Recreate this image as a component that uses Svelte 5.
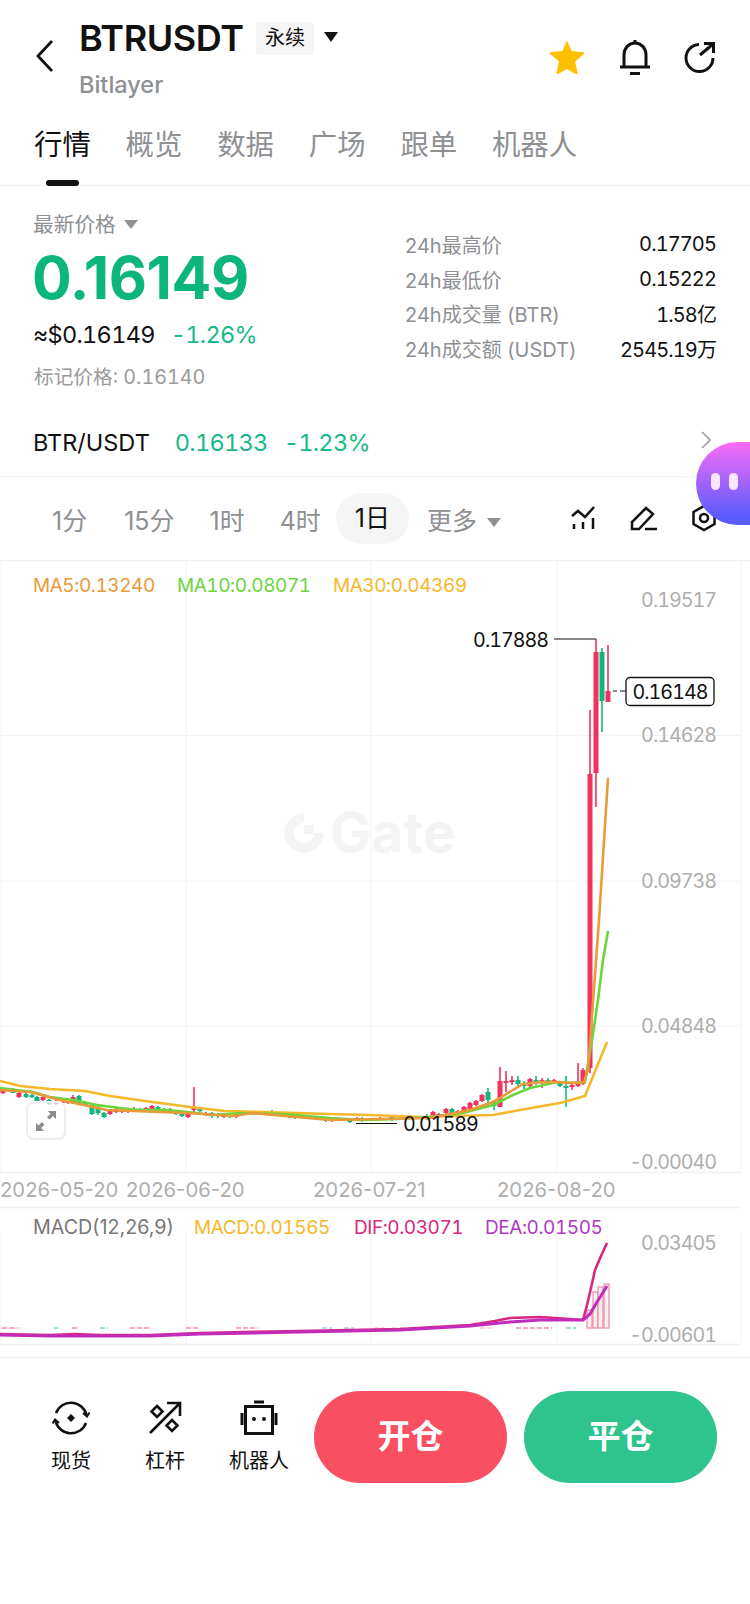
<script>
  const tabs = ['行情', '概览', '数据', '广场', '跟单', '机器人'];
  const stats = [
    ['24h最高价', '0.17705'],
    ['24h最低价', '0.15222'],
    ['24h成交量 (BTR)', '1.58亿'],
    ['24h成交额 (USDT)', '2545.19万']
  ];
  const frames = ['1分', '15分', '1时', '4时', '1日'];
  const R = '#f0325e', G = '#12b67a';
  // x, wick top, wick bottom, body top, body bottom, colour
  const candles = [
    [3,1088,1094,1090,1093,R],[13,1088,1093,1090,1093,G],[19,1092,1098,1093,1097,R],[26,1092,1098,1094,1097,G],[32,1094,1098,1095,1097,G],[37,1096,1102,1097,1101,G],[43,1095,1101,1097,1100,R],[49,1099,1105,1100,1104,G],[56,1100,1105,1101,1104,R],[62,1101,1104,1102,1103,R],[68,1101,1104,1102,1103,R],[73,1095,1104,1097,1103,R],[79,1095,1105,1096,1104,G],[85,1101,1106,1102,1105,G],[92,1104,1115,1105,1114,G],[98,1106,1115,1107,1113,G],[104,1112,1118,1113,1117,G],[110,1111,1115,1111,1114,R],[116,1108,1113,1109,1112,R],[122,1109,1113,1110,1112,R],[128,1109,1113,1110,1112,R],[134,1107,1112,1109,1111,R],[140,1108,1112,1109,1111,G],[146,1107,1111,1108,1110,R],[152,1105,1111,1106,1110,R],[158,1106,1110,1107,1109,G],[164,1108,1111,1109,1110,G],[170,1108,1112,1109,1111,G],[176,1111,1115,1112,1114,G],[182,1113,1117,1114,1116,G],[188,1113,1118,1114,1117,R],[194,1087,1112,1107,1110,R],[200,1107,1112,1108,1111,G],[206,1112,1116,1113,1115,R],[212,1112,1118,1113,1116,G],[218,1113,1118,1114,1116,G],[224,1113,1118,1114,1117,R],[230,1114,1118,1115,1117,G],[236,1110,1118,1114,1117,R],[242,1111,1116,1112,1115,G],[253,1111,1115,1112,1114,G],[272,1110,1115,1112,1114,G],[283,1112,1116,1113,1115,G],[289,1113,1118,1114,1117,G],[295,1115,1119,1116,1118,G],[302,1115,1118,1116,1117,R],[320,1116,1120,1117,1119,G],[326,1118,1122,1119,1121,G],[332,1117,1122,1118,1121,R],[350,1119,1123,1120,1122,G],[357,1117,1121,1118,1120,R],[362,1117,1122,1118,1121,G],[380,1117,1120,1118,1119,R],[392,1116,1121,1117,1120,G],[427,1114,1120,1116,1119,G],[433,1111,1119,1112,1118,R],[439,1113,1118,1114,1117,R],[446,1108,1114,1109,1113,R],[452,1108,1114,1109,1113,G],[458,1110,1114,1111,1113,R],[464,1106,1113,1107,1112,R],[470,1102,1110,1103,1109,R],[476,1100,1106,1101,1105,R],[482,1094,1102,1095,1101,R],[488,1088,1105,1092,1100,G],[494,1100,1110,1102,1106,G],[500,1067,1107,1081,1107,R],[506,1071,1092,1081,1083,R],[512,1076,1085,1080,1082,R],[518,1076,1086,1080,1084,G],[524,1081,1089,1083,1086,G],[530,1078,1087,1079,1086,R],[536,1076,1085,1080,1082,G],[542,1078,1088,1080,1083,R],[548,1078,1085,1080,1082,G],[554,1079,1083,1080,1082,R],[560,1082,1087,1083,1086,G],[566,1076,1107,1086,1088,G],[572,1084,1090,1085,1087,R],[578,1063,1087,1084,1086,R],[583,1068,1085,1070,1084,R],[590,710,1073,774,1068,R],[596,639,807,652,773,R],[602,648,732,652,701,G],[608,645,700,691,702,R]
  ];
  const pts = (a) => a.map((p) => p.join(',')).join(' ');
  const ma30 = pts([[0,1081],[20,1086],[50,1089],[85,1091],[110,1096],[145,1101],[190,1107],[225,1111],[265,1112],[330,1114],[370,1115],[420,1117],[493,1115],[520,1110],[560,1103],[585,1096],[607,1042]]);
  const ma10 = pts([[0,1088],[33,1092],[50,1097],[73,1100],[97,1105],[120,1108],[140,1110],[167,1110],[187,1112],[213,1115],[240,1113],[283,1114],[330,1118],[363,1120],[397,1119],[430,1117],[463,1113],[493,1105],[513,1095],[530,1088],[557,1082],[577,1083],[585,1082],[592,1040],[598,1000],[603,960],[608,931]]);
  const ma5 = pts([[0,1090],[30,1092],[60,1100],[107,1110],[133,1111],[187,1113],[233,1116],[253,1113],[330,1120],[430,1118],[470,1110],[493,1102],[500,1098],[513,1090],[523,1084],[543,1082],[557,1082],[570,1083],[584,1082],[588,1070],[599,920],[608,778]]);
  const dif = pts([[0,1334],[50,1335],[75,1334],[100,1335],[150,1335],[200,1333],[300,1331],[400,1329],[470,1325],[495,1321],[510,1318],[540,1317],[570,1319],[583,1320],[587,1305],[591,1288],[595,1270],[601,1256],[607,1243]]);
  const dea = pts([[0,1335],[50,1336],[100,1336],[150,1336],[200,1334],[300,1332],[400,1330],[470,1326],[510,1322],[540,1320],[570,1320],[583,1320],[590,1314],[597,1302],[607,1286]]);
  const hist = [[587,1310],[593,1292],[598,1287],[604,1284]];
  const dashes = [[2,12,R],[14,8,'#f4a0b0'],[54,4,G],[72,6,R],[100,8,G],[130,20,R],[186,12,R],[236,22,R],[322,10,'#6aa5d8'],[344,10,'#6aa5d8'],[374,10,'#f4a0b0'],[392,14,'#f4a0b0'],[414,30,R],[480,12,'#f4a0b0'],[516,36,R],[566,10,G]];
  const vx = [1, 186, 371, 557, 741];
  const hy = [735.5, 881, 1026];
  const axis = [['0.19517',600],['0.14628',735],['0.09738',881],['0.04848',1026],['-0.00040',1162],['0.03405',1243],['-0.00601',1335]];
  const dates = [['2026-05-20',0],['2026-06-20',126],['2026-07-21',313],['2026-08-20',497]];
</script>

<div class="page">
  <header class="head">
    <svg class="back" width="20" height="32" viewBox="0 0 20 32"><path d="M17 1 3 16l14 15" fill="none" stroke="#111" stroke-width="2.800"/></svg>
    <div class="names">
      <div class="title-row">
        <span class="title">BTRUSDT</span>
        <span class="badge">永续</span>
        <span class="caret dark"></span>
      </div>
      <div class="sub">Bitlayer</div>
    </div>
    <div class="head-icons">
      <svg width="38" height="36" viewBox="0 0 38 36"><path d="M19 2.500l4.600 10.600 11.500 1.100c1 .1 1.400 1.300.6 2l-8.700 7.500 2.600 11c.2 1-.9 1.800-1.800 1.300L19 31l-8.800 4.900c-.9.500-2-.3-1.800-1.300l2.600-11-8.700-7.500c-.8-.7-.4-1.900.6-2l11.500-1.100z" fill="#ffc000" transform="translate(0 -1)"/></svg>
      <svg width="32" height="36" viewBox="0 0 32 36"><path d="M5 27V16C5 9 10 4 16 4s11 5 11 12v11M1 28h30M16 1v3" fill="none" stroke="#111" stroke-width="3"/><path d="M11 33h10v3H11z" fill="#111"/></svg>
      <svg width="32" height="32" viewBox="0 0 32 32"><path d="M15 3.500A13.500 13.500 0 1 0 29 17" fill="none" stroke="#111" stroke-width="3"/><path d="M16 14 29 3M20 2.500h9.500V12" fill="none" stroke="#111" stroke-width="3"/></svg>
    </div>
  </header>

  <nav class="tabs">
    {#each tabs as t, i}
      <span class="tab" class:active={i === 0}>{t}</span>
    {/each}
  </nav>

  <section class="quote">
    <div class="left">
      <div class="muted latest">最新价格<span class="caret grey"></span></div>
      <div class="price">0.16149</div>
      <div class="conv"><span>≈$0.16149</span><span class="up">-1.26%</span></div>
      <div class="mark">标记价格: 0.16140</div>
    </div>
    <dl class="stats">
      {#each stats as s}
        <div class="stat"><dt>{s[0]}</dt><dd>{s[1]}</dd></div>
      {/each}
    </dl>
  </section>

  <div class="spot">
    <span class="pair">BTR/USDT</span>
    <span class="up">0.16133</span>
    <span class="up">-1.23%</span>
    <svg class="chev" width="12" height="18" viewBox="0 0 12 18"><path d="M2 1l8 8-8 8" fill="none" stroke="#999" stroke-width="1.600"/></svg>
  </div>

  <div class="frames">
    {#each frames as f, i}
      <span class="frame" class:on={i === 4}>{f}</span>
    {/each}
    <span class="frame more">更多 <span class="caret grey"></span></span>
    <div class="tools">
      <svg width="26" height="26" viewBox="0 0 26 26" fill="none" stroke="#111" stroke-width="2.500"><path d="M1 11l6-5 7 6 9-10"/><path d="M3 19v5M12 17v7M22 13v11"/></svg>
      <svg width="28" height="26" viewBox="0 0 28 26" fill="none" stroke="#111" stroke-width="2.500"><path d="M2 24v-7L16 3l7 6L9 24zM15 24h12"/></svg>
      <svg width="26" height="28" viewBox="0 0 26 28" fill="none" stroke="#111" stroke-width="2.500"><path d="M13 2l10.500 6v12L13 26 2.500 20V8z"/><circle cx="13" cy="14" r="4"/></svg>
    </div>
  </div>

  <div class="chart">
    <svg class="plot" width="750" height="798" viewBox="0 560 750 798">
      <path d="M0 560.500H750M0 1172.500H741M0 1207.500H741M0 1344.500H741M0 1357.500H750" stroke="#f0f0f0" stroke-width="1.500" fill="none"/>
      {#each vx as x}
        <path d="M{x} 560V1172M{x} 1232V1344" stroke="#f3f3f3" fill="none"/>
      {/each}
      {#each hy as y}
        <path d="M0 {y}H741" stroke="#f3f3f3" fill="none"/>
      {/each}

      <g class="wm">
        <path d="M305 818a15 15 0 1 0 15 15" fill="none" stroke="#f3f4f4" stroke-width="9.500" transform="translate(-1 0)"/>
        <rect x="304" y="825" width="10" height="9" fill="#f3f4f4"/>
        <text x="330" y="852" class="wmt">Gate</text>
      </g>

      <text x="33" y="592" class="t lab o">MA5:0.13240</text>
      <text x="177" y="592" class="t lab l">MA10:0.08071</text>
      <text x="333" y="592" class="t lab y">MA30:0.04369</text>

      {#each axis as a}
        <text x="716" y={a[1] + 7} text-anchor="end" class="t ax">{a[0]}</text>
      {/each}
      {#each dates as d}
        <text x={d[1]} y="1197" class="date">{d[0]}</text>
      {/each}

      {#each candles as c}
        <path d="M{c[0]} {c[1]}V{c[2]}" stroke={c[5]} stroke-width="1.600" fill="none"/>
        <rect x={c[0] - 2.500} y={c[3]} width="5" height={c[4] - c[3]} fill={c[5]}/>
      {/each}

      <polyline points={ma30} class="ln" stroke="#f5b82b"/>
      <polyline points={ma10} class="ln" stroke="#6bd63b"/>
      <polyline points={ma5} class="ln" stroke="#ea9a38"/>

      <path d="M554 639H596M356 1123.500H397" stroke="#111" stroke-width="1.200" fill="none"/>
      <path d="M613 691h4M620 691h6" stroke="#111" stroke-width="1.200" fill="none"/>
      <text x="548" y="647" text-anchor="end" class="t k">0.17888</text>
      <text x="403" y="1131" class="t k">0.01589</text>
      <rect x="626" y="677.500" width="88" height="28" rx="4" fill="#fff" stroke="#111" stroke-width="1.300"/>
      <text x="670" y="699" text-anchor="middle" class="t k">0.16148</text>

      <text x="33" y="1234" class="macd mc">MACD(12,26,9)</text>
      <text x="194" y="1234" class="t lab y">MACD:0.01565</text>
      <text x="354" y="1234" class="t lab dif">DIF:0.03071</text>
      <text x="485" y="1234" class="t lab dea">DEA:0.01505</text>

      {#each dashes as d}
        <path d="M{d[0]} 1328H{d[0] + d[1]}" stroke={d[2]} stroke-width="1.600" stroke-dasharray="5 2" fill="none" opacity=".55"/>
      {/each}
      {#each hist as h}
        <rect x={h[0]} y={h[1]} width="5" height={1328 - h[1]} fill="#fdeef1" stroke="#e98ba2" stroke-width="1.200"/>
      {/each}
      <polyline points={dif} class="ln" stroke="#d6287e"/>
      <polyline points={dea} class="ln thick" stroke="#c22cbc"/>
    </svg>
    <div class="expand">
      <svg width="22" height="22" viewBox="0 0 22 22" fill="#8b8b8b"><path d="M13 1h8v8l-3-3-3.500 3.500-2.500-2.500L15.500 4zM1 13v8h8l-3-3 3.500-3.500L7 12l-3.500 3.500z"/></svg>
    </div>
  </div>

  <footer class="actions">
    <div class="act">
      <svg width="38" height="38" viewBox="0 0 38 38" fill="none" stroke="#111" stroke-width="2.600"><path d="M4 14A16 16 0 0 1 34.500 16M34 24A16 16 0 0 1 3.500 22"/><path d="M31 14l4 3.500 2.500-4M7 24l-4-3.500-2.500 4" stroke-width="2"/><path d="M19 15l4 4-4 4-4-4z" fill="#111" stroke="none"/></svg>
      <span>现货</span>
    </div>
    <div class="act">
      <svg width="36" height="36" viewBox="0 0 36 36" fill="none" stroke="#111" stroke-width="2.600"><path d="M3 33 32 4M20 3h13v13M10 6l5.500 5.500L10 17l-5.500-5.500zM25 20l5.500 5.500L25 31l-5.500-5.500z"/></svg>
      <span>杠杆</span>
    </div>
    <div class="act">
      <svg width="38" height="36" viewBox="0 0 38 36" fill="none" stroke="#111" stroke-width="3"><rect x="5.500" y="6.500" width="27" height="27"/><path d="M14 2h10M2 13v12M36 13v12"/><circle cx="14" cy="19" r="2" fill="#111" stroke="none"/><circle cx="24" cy="19" r="2" fill="#111" stroke="none"/></svg>
      <span>机器人</span>
    </div>
    <button class="btn open">开仓</button>
    <button class="btn close">平仓</button>
  </footer>

  <div class="pet"><i></i><i></i></div>
</div>

<style>
  :global(body) { margin: 0; background: #fff; }
  .page {
    position: relative; width: 750px; height: 1604px; overflow: hidden; background: #fff;
    font-family: Inter, "Noto Sans CJK SC", sans-serif; color: #111;
  }
  .head { display: flex; height: 106px; padding-left: 35px; box-sizing: border-box; position: relative; }
  .back { margin-top: 40px; flex: none; }
  .names { margin-left: 24px; padding-top: 19px; }
  .title-row { display: flex; align-items: center; height: 38px; }
  .title { font-size: 36px; font-weight: 600; letter-spacing: -0.4px; width: 177px; }
  .badge { background: #f5f5f5; border-radius: 4px; width: 58px; height: 33px; font-size: 20px; line-height: 33px; text-align: center; }
  .caret { display: inline-block; width: 0; height: 0; border-left: 7px solid transparent; border-right: 7px solid transparent; }
  .caret.dark { border-top: 10px solid #111; margin-left: 10px; margin-bottom: 3px; }
  .caret.grey { border-top: 9px solid #8e9094; margin-left: 8px; vertical-align: 3px; }
  .sub { font-size: 23.500px; font-weight: 500; color: #8e9094; margin-top: 14px; line-height: 28px; }
  .head-icons { position: absolute; right: 34px; top: 39px; display: flex; gap: 33px; align-items: center; }

  .tabs { display: flex; gap: 34.800px; padding-left: 34px; height: 80px; border-bottom: 1.500px solid #f1f1f1; box-sizing: border-box; }
  .tab { font-size: 28.400px; line-height: 40px; margin-top: 19px; color: #8e9094; position: relative; height: 40px; }
  .tab.active { color: #111; }
  .tab.active::after { content: ""; position: absolute; left: 12px; top: 55px; width: 33px; height: 6px; border-radius: 3px; background: #111; }

  .quote { display: flex; height: 212px; padding: 0 34px; box-sizing: border-box; font-variant-numeric: tabular-nums; }
  .left { width: 371px; }
  .muted { color: #8e9094; }
  .latest { font-size: 20.700px; line-height: 28px; margin-top: 25px; margin-left: -1px; }
  .price { font-size: 59px; font-weight: 700; color: #0bb57c; line-height: 64px; letter-spacing: -0.400px; margin-top: 7px; margin-left: -2px; font-variant-numeric: normal; }
  .conv { display: flex; gap: 16px; font-size: 23.500px; letter-spacing: -0.700px; line-height: 30px; margin-top: 10px; margin-left: -1px; }
  .up { color: #17b98a; }
  .mark { font-size: 19.700px; line-height: 28px; color: #9a9a9a; margin-top: 13px; }
  .stats { flex: 1; margin: 41px 0 0; }
  .stat { display: flex; justify-content: space-between; height: 34.700px; align-items: center; font-size: 20px; }
  dt { color: #8e9094; font-variant-numeric: normal; }
  dd { margin: 0; color: #111; letter-spacing: -0.900px; }

  .spot { display: flex; align-items: center; height: 79px; padding: 10px 39px 0 33px; font-size: 23.500px; border-bottom: 1.500px solid #f1f1f1; box-sizing: border-box; position: relative; font-variant-numeric: tabular-nums; }
  .spot .up { letter-spacing: -0.700px; }
  .pair { margin-right: 25px; }
  .spot .up + .up { margin-left: 16px; }
  .chev { position: absolute; right: 38px; top: 33px; }

  .frames { display: flex; align-items: center; height: 83px; position: relative; font-size: 25px; color: #8e9094; box-sizing: border-box; }
  .frame { position: relative; }
  .frame:nth-child(1) { margin-left: 52px; }
  .frame:nth-child(2) { margin-left: 37px; }
  .frame:nth-child(3) { margin-left: 35px; }
  .frame:nth-child(4) { margin-left: 35px; }
  .frame.on { color: #111; background: #f5f5f5; width: 73px; height: 51px; line-height: 51px; border-radius: 26px; text-align: center; margin-left: 15px; font-size: 25px; }
  .frame.more { margin-left: 18px; }
  .more .caret { margin-left: 3px; }
  .tools { position: absolute; left: 571px; top: 27px; display: flex; gap: 33px; align-items: center; }

  .chart { position: relative; height: 798px; }
  .plot { display: block; }
  .t { font-family: Inter, sans-serif; font-size: 19.700px; font-variant-numeric: tabular-nums; letter-spacing: -1px; }
  .lab { font-size: 19px; letter-spacing: -0.450px; }
  .macd { font-family: Inter, sans-serif; font-size: 19.700px; }
  .date { font-family: Inter, sans-serif; font-size: 20.300px; fill: #aeaeae; }
  .o { fill: #ea9a38; } .l { fill: #6bd63b; } .y { fill: #f5b82b; }
  .ax { fill: #aeaeae; }
  .k { fill: #111; }
  .mc { fill: #777; } .dif { fill: #d6287e; } .dea { fill: #b03ac4; }
  .ln { fill: none; stroke-width: 2.600; stroke-linejoin: round; }
  .thick { stroke-width: 3; }
  .wmt { font-family: Inter, sans-serif; font-size: 55px; font-weight: 700; fill: #f3f4f4; }
  .expand { position: absolute; left: 26px; top: 541px; width: 40px; height: 39px; box-sizing: border-box; border: 2px solid #eee; border-radius: 8px; background: rgba(255,255,255,.65); display: flex; align-items: center; justify-content: center; }

  .actions { display: flex; align-items: flex-start; padding: 33px 33px 0 0; }
  .act { width: 94px; display: flex; flex-direction: column; align-items: center; font-size: 20px; flex: none; }
  .act svg { display: block; height: 38px; margin-top: 8px; }
  .act span { margin-top: 10px; line-height: 28px; }
  .act:first-child { margin-left: 24px; }
  .btn { width: 193px; height: 92px; border: 0; border-radius: 46px; color: #fff; font: 600 33px Inter, "Noto Sans CJK SC", sans-serif; flex: none; padding: 0 0 6px; }
  .open { background: #f84f63; margin-left: 8px; }
  .close { background: #2dc48d; margin-left: 17px; }

  .pet { position: absolute; left: 696px; top: 442px; width: 54px; height: 83px; background: linear-gradient(180deg, #f96cf5, #5a5cff 90%); border-radius: 42px 0 0 42px; }
  .pet i { position: absolute; top: 31px; width: 9px; height: 17px; border-radius: 5px; background: #f6e6ff; }
  .pet i:nth-child(1) { left: 15px; }
  .pet i:nth-child(2) { left: 33px; }
</style>
